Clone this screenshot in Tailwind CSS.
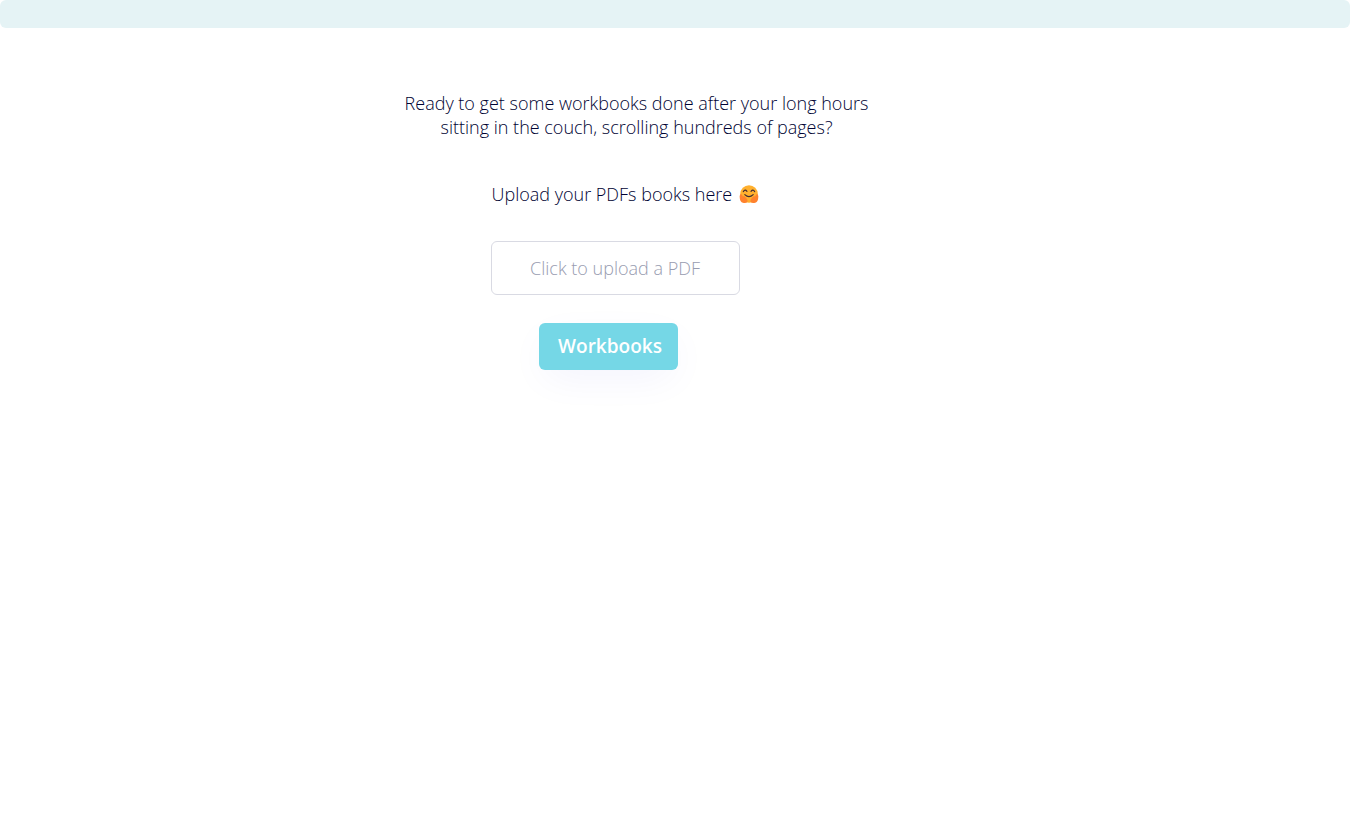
<!DOCTYPE html>
<html lang="en">
<head>
<meta charset="utf-8">
<meta name="viewport" content="width=device-width, initial-scale=1">
<title>Workbooks</title>
<script src="https://cdn.jsdelivr.net/npm/@tailwindcss/browser@4"></script>
</head>
<body class="min-h-screen bg-white font-['Open_Sans',sans-serif] text-lg leading-6 font-light text-[#000333]">
<header class="mr-px h-7 rounded-md bg-[#e5f3f5]"></header>
<main class="flex flex-col items-center pt-[63px] pr-[78px]">
  <p class="max-w-[480px] text-center">Ready to get some workbooks done after your long hours sitting in the couch, scrolling hundreds of pages?</p>
  <form class="mt-[43px] flex w-[292px] flex-col items-start">
    <label for="pdf" class="flex items-center gap-[7px] pl-px whitespace-nowrap">Upload your PDFs books here
      <svg class="size-5" viewBox="0 0 20 20" aria-hidden="true">
        <circle cx="10" cy="10" r="8.8" fill="#ffb02e"/>
        <path d="M4.3 7.6q1.8-2.8 3.7-.3M12 7.3q2-2.5 3.7.3" fill="none" stroke="#402a32" stroke-width="1.1" stroke-linecap="round"/>
        <path d="M5.8 10.6q4.2 4 8.4 0" fill="none" stroke="#402a32" stroke-width="1.1" stroke-linecap="round"/>
        <path d="M1.2 10.5q-.9 1.4-.4 3.7.4 3.8 3 4.6 3.4.9 4.6-1 .6-2-1.2-3.8l-1.8-1.8q-1-.6-1.2.7l-1.5-2.3q-1-1-1.5-.1z" fill="#ff822d"/>
        <path d="M18.8 10.5q.9 1.4.4 3.7-.4 3.8-3 4.6-3.4.9-4.6-1-.6-2 1.2-3.8l1.8-1.8q1-.6 1.2.7l1.5-2.3q1-1 1.5-.1z" fill="#ff822d"/>
      </svg>
    </label>
    <input id="pdf" type="text" placeholder="Click to upload a PDF" class="mt-[35px] h-[54px] w-[249px] rounded-md border border-[#d9dae3] bg-white text-center placeholder:text-[#989cb0]">
    <button type="submit" class="mt-7 ml-12 h-[47px] w-[139px] rounded-md bg-[#75d7e6] pb-0.5 pl-1 text-[19px] font-semibold text-white shadow-[0_12px_40px_-6px_rgba(22,8,213,0.06)]">Workbooks</button>
  </form>
</main>
</body>
</html>
